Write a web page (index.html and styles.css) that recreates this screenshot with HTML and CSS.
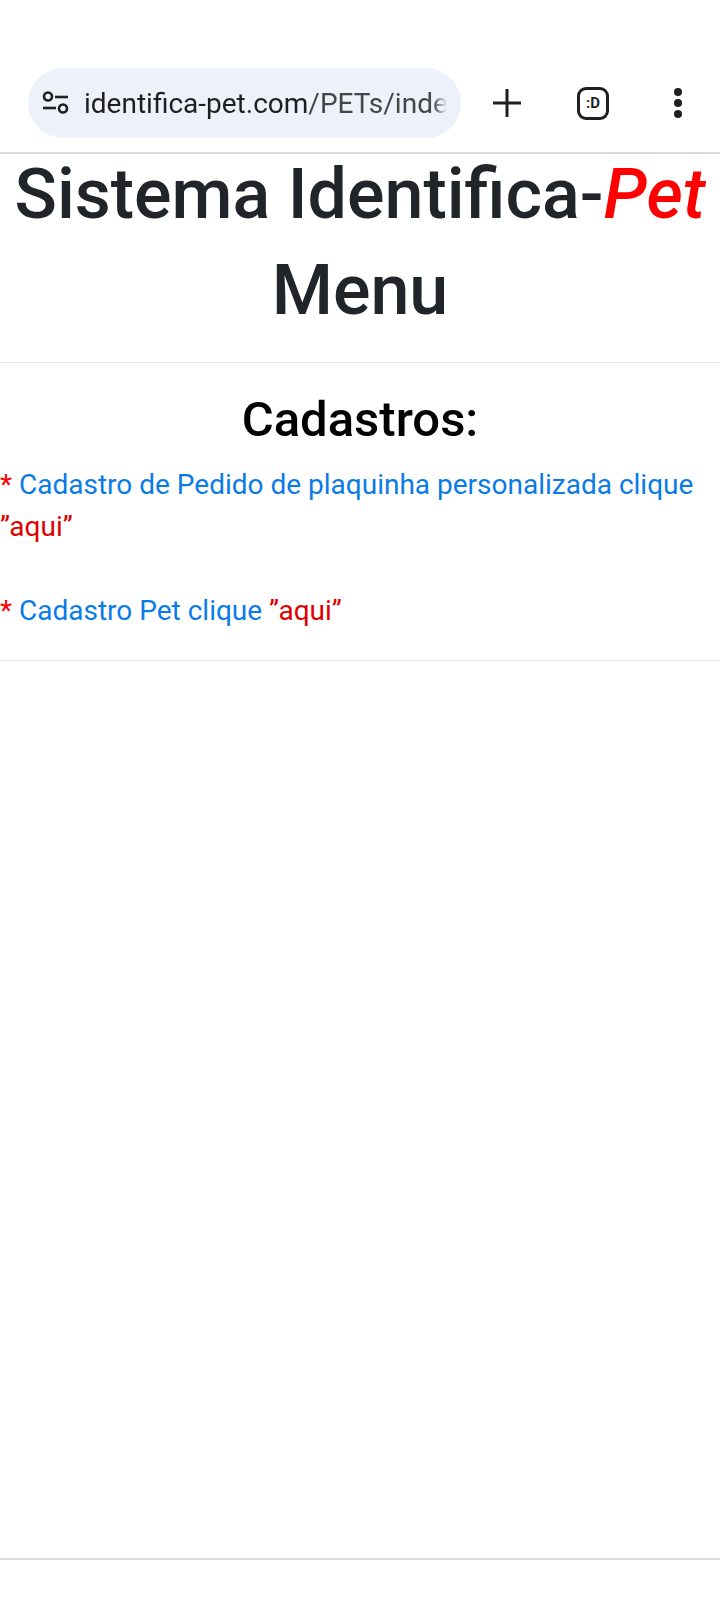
FILE: index.html
```html
<!DOCTYPE html>
<html lang="pt-BR">

<head>
  <meta charset="UTF-8">
  <meta name="viewport" content="width=device-width, initial-scale=1.0">
  <title>Sistema Identifica-Pet - Menu</title>
  <link rel="stylesheet" href="styles.css">
</head>

<body>
  <header class="toolbar">
    <div class="url-bar">
      <svg class="tune-icon" viewBox="0 0 28 24" width="28" height="24" fill="none" stroke="#1f1f1f" stroke-width="2.6">
        <circle cx="6" cy="5.5" r="4" />
        <path d="M13 6h13" />
        <circle cx="21" cy="17.5" r="4" />
        <path d="M1 17h13" />
      </svg>
      <div class="url-text">identifica-pet.com<span class="url-path">/PETs/inde</span></div>
    </div>
    <button class="tool-btn plus-btn" aria-label="Nova aba">
      <svg viewBox="0 0 32 32" width="32" height="32" fill="none" stroke="#1f1f1f" stroke-width="3">
        <path d="M16 2v28M2 16h28" />
      </svg>
    </button>
    <button class="tool-btn" aria-label="Abas">
      <span class="tab-count">:D</span>
    </button>
    <button class="tool-btn dots-btn" aria-label="Mais">
      <svg viewBox="0 0 10 32" width="10" height="32" fill="#1f1f1f">
        <circle cx="5" cy="5" r="4" />
        <circle cx="5" cy="16" r="4" />
        <circle cx="5" cy="27" r="4" />
      </svg>
    </button>
  </header>

  <main>
    <h1>Sistema Identifica-<em>Pet</em><br>Menu</h1>
    <hr>
    <h2>Cadastros:</h2>
    <p><span class="mark">*</span> <a href="#">Cadastro de Pedido de plaquinha personalizada clique <span class="here">”aqui”</span></a></p>
    <p><span class="mark">*</span> <a href="#">Cadastro Pet clique <span class="here">”aqui”</span></a></p>
    <hr class="end">
  </main>

  <footer></footer>
</body>
</html>
```

FILE: styles.css
```css
* {
  box-sizing: border-box;
}

body {
  margin: 0;
  height: 1600px;
  display: flex;
  flex-direction: column;
  font-family: Roboto, sans-serif;
  background-color: #fff;
  color: #212529;
}

.toolbar {
  height: 154px;
  padding: 69px 0 15px 28px;
  display: flex;
  align-items: center;
  border-bottom: 2px solid #d9d9d9;
}

.url-bar {
  width: 433px;
  height: 70px;
  flex: none;
  display: flex;
  align-items: center;
  gap: 14px;
  padding: 0 14px;
  background-color: #edf2fa;
  border-radius: 35px;
}

.tune-icon {
  flex: none;
}

.url-text {
  flex: 1;
  overflow: hidden;
  white-space: nowrap;
  font-size: 28px;
  color: #1f1f1f;
  mask-image: linear-gradient(to left, transparent 0, #000 14px);
}

.url-path {
  color: #444746;
}

.tool-btn {
  width: 86px;
  height: 70px;
  flex: none;
  display: flex;
  align-items: center;
  justify-content: center;
  padding: 0;
  border: 0;
  background: none;
}

.plus-btn {
  margin-left: 3px;
}

.dots-btn {
  margin-left: -1px;
}

.tab-count {
  width: 32px;
  height: 33px;
  display: flex;
  align-items: center;
  justify-content: center;
  border: 3.5px solid #1f1f1f;
  border-radius: 9px;
  font-family: Roboto, sans-serif;
  font-size: 15px;
  font-weight: 700;
  color: #1f1f1f;
}

main {
  flex: 1;
}

h1 {
  margin: -8px 0 0;
  font-size: 70px;
  font-weight: 500;
  line-height: 96px;
  text-align: center;
}

h1 em {
  color: #f00;
}

hr {
  margin: 24px 0 0;
  border: 0;
  border-top: 1px solid #e4e4e4;
}

h2 {
  margin: 28px 0 15px;
  font-size: 49px;
  font-weight: 500;
  line-height: 58px;
  text-align: center;
  color: #000;
}

p {
  margin: 0 0 42px;
  font-size: 28px;
  line-height: 42px;
}

a {
  color: #0a7be6;
  text-decoration: none;
}

.mark {
  color: #f00;
}

.here {
  color: #e00000;
}

hr.end {
  margin-top: -14px;
}

footer {
  height: 42px;
  border-top: 2px solid #dcdcdc;
  background-color: #fff;
}
```
